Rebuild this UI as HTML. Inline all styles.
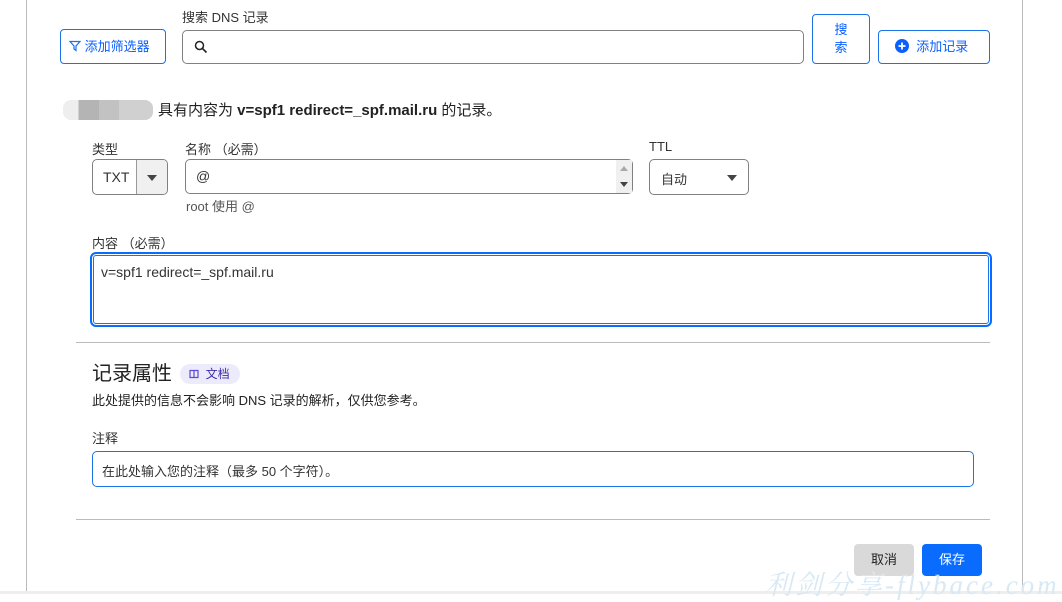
<!DOCTYPE html>
<html><head><meta charset="utf-8"><style>
*{box-sizing:border-box;margin:0;padding:0}
body{width:1062px;height:594px;background:#fff;position:relative;overflow:hidden;font-family:"Liberation Sans","Noto Sans CJK SC",sans-serif;color:#222;font-size:14px}
.a{position:absolute}
.lbl{font-size:13px;color:#333}
.box{border:1px solid #808080;border-radius:5px;background:#fff}
.blue{color:#0a5fff;border:1px solid #1a73e8;border-radius:4px;background:#fff}
</style></head><body>
<div class="a" style="left:26px;top:0;width:1px;height:594px;background:#bbb"></div>
<div class="a" style="left:1022px;top:0;width:1px;height:594px;background:#bbb"></div>
<div class="a" style="left:0;top:591px;width:1062px;height:3px;background:#eee"></div>

<div class="a blue" style="left:60px;top:29px;width:106px;height:35px;font-size:13px;line-height:33px;padding-left:8px">
<svg width="12" height="12" viewBox="0 0 12 12" style="vertical-align:-1px"><path d="M1 1.5h10L7 6v4.5L5 9V6z" fill="none" stroke="#1a73e8" stroke-width="1.2"/></svg> 添加筛选器</div>
<div class="a lbl" style="left:182px;top:7px">搜索 DNS 记录</div>
<div class="a box" style="left:182px;top:30px;width:622px;height:34px">
<svg class="a" style="left:11px;top:9px" width="14" height="14" viewBox="0 0 14 14"><circle cx="5.5" cy="5.5" r="4" fill="none" stroke="#222" stroke-width="1.5"/><path d="M8.5 8.5l4 4" stroke="#222" stroke-width="1.6"/></svg></div>
<div class="a blue" style="left:812px;top:14px;width:58px;height:50px;font-size:13px;text-align:center;line-height:18px;padding-top:6px">搜<br>索</div>
<div class="a blue" style="left:878px;top:30px;width:112px;height:34px;font-size:13px;line-height:32px;padding-left:16px">
<svg width="14" height="14" viewBox="0 0 14 14" style="vertical-align:-2px"><circle cx="7" cy="7" r="7" fill="#0a5fff"/><path d="M7 3.5v7M3.5 7h7" stroke="#fff" stroke-width="1.8"/></svg>&nbsp; 添加记录</div>

<div class="a" style="left:63px;top:100px;width:90px;height:20px;border-radius:8px;background:linear-gradient(90deg,#eee 0 17%,#b5b4b5 17% 40%,#c2c2c2 40% 62%,#d0d0d0 62%)"></div>
<div class="a" style="left:158px;top:99px;font-size:15px">具有内容为 <b>v=spf1 redirect=_spf.mail.ru</b> 的记录。</div>

<div class="a lbl" style="left:92px;top:139px">类型</div>
<div class="a box" style="left:92px;top:159px;width:76px;height:36px;overflow:hidden">
<div class="a" style="left:10px;top:9px;font-size:14px;color:#333">TXT</div>
<div class="a" style="left:43px;top:0;width:33px;height:36px;background:#f0f0f0;border-left:1px solid #999"></div>
<div class="a" style="left:54px;top:15px;border:5px solid transparent;border-top:6px solid #444"></div></div>
<div class="a lbl" style="left:185px;top:139px">名称 （必需）</div>
<div class="a box" style="left:185px;top:159px;width:448px;height:35px">
<div class="a" style="left:10px;top:8px;color:#333">@</div>
<div class="a" style="left:430px;top:0;width:16px;height:33px;background:#f0f0f0"></div>
<div class="a" style="left:434px;top:6px;border:4px solid transparent;border-bottom:5px solid #aaa;border-top:0"></div>
<div class="a" style="left:434px;top:22px;border:4px solid transparent;border-top:5px solid #444;border-bottom:0"></div></div>
<div class="a lbl" style="left:186px;top:196px;color:#555">root 使用 @</div>
<div class="a lbl" style="left:649px;top:139px">TTL</div>
<div class="a box" style="left:649px;top:159px;width:100px;height:36px">
<div class="a" style="left:11px;top:9px;font-size:13px;color:#333">自动</div>
<div class="a" style="left:77px;top:15px;border:5px solid transparent;border-top:6px solid #444"></div></div>

<div class="a lbl" style="left:92px;top:233px">内容 （必需）</div>
<div class="a" style="left:90px;top:252px;width:902px;height:75px;border:2px solid #0a6cff;border-radius:6px;box-shadow:inset 0 0 0 1px #fff,inset 0 0 0 2px #1a73e8">
<div class="a" style="left:9px;top:10px;color:#333">v=spf1 redirect=_spf.mail.ru</div></div>

<div class="a" style="left:76px;top:342px;width:914px;height:1px;background:#bbb"></div>
<div class="a" style="left:92px;top:361px;font-size:20px;line-height:26px;color:#222">记录属性</div>
<div class="a" style="left:180px;top:364px;width:60px;height:20px;border-radius:10px;background:#ecebfb;color:#3d2fa8;font-size:12px;line-height:20px;padding-left:9px">
<svg width="10" height="10" viewBox="0 0 10 10" style="vertical-align:-1px"><path d="M1 1.5h8v7H1zM5 1.5v7" fill="none" stroke="#5b4bd8" stroke-width="1.2"/></svg>&nbsp; 文档</div>
<div class="a" style="left:92px;top:390px;font-size:13px;color:#222">此处提供的信息不会影响 DNS 记录的解析，仅供您参考。</div>
<div class="a lbl" style="left:92px;top:428px">注释</div>
<div class="a" style="left:92px;top:451px;width:882px;height:36px;border:1px solid #1a73e8;border-radius:5px">
<div class="a" style="left:9px;top:9px;font-size:13px;color:#333">在此处输入您的注释（最多 50 个字符）。</div></div>

<div class="a" style="left:76px;top:519px;width:914px;height:1px;background:#bbb"></div>
<div class="a" style="left:854px;top:544px;width:60px;height:32px;border-radius:4px;background:#d9d9d9;text-align:center;line-height:32px;font-size:13px;color:#222">取消</div>
<div class="a" style="left:922px;top:544px;width:60px;height:32px;border-radius:4px;background:#0a6cff;text-align:center;line-height:32px;font-size:13px;color:#fff">保存</div>
<div class="a" style="left:765px;top:563px;font-size:27px;color:#d8e9f5;font-style:italic;letter-spacing:3px;font-family:'Liberation Serif','Noto Serif CJK SC',serif">利剑分享-flybace.com</div>
</body></html>
